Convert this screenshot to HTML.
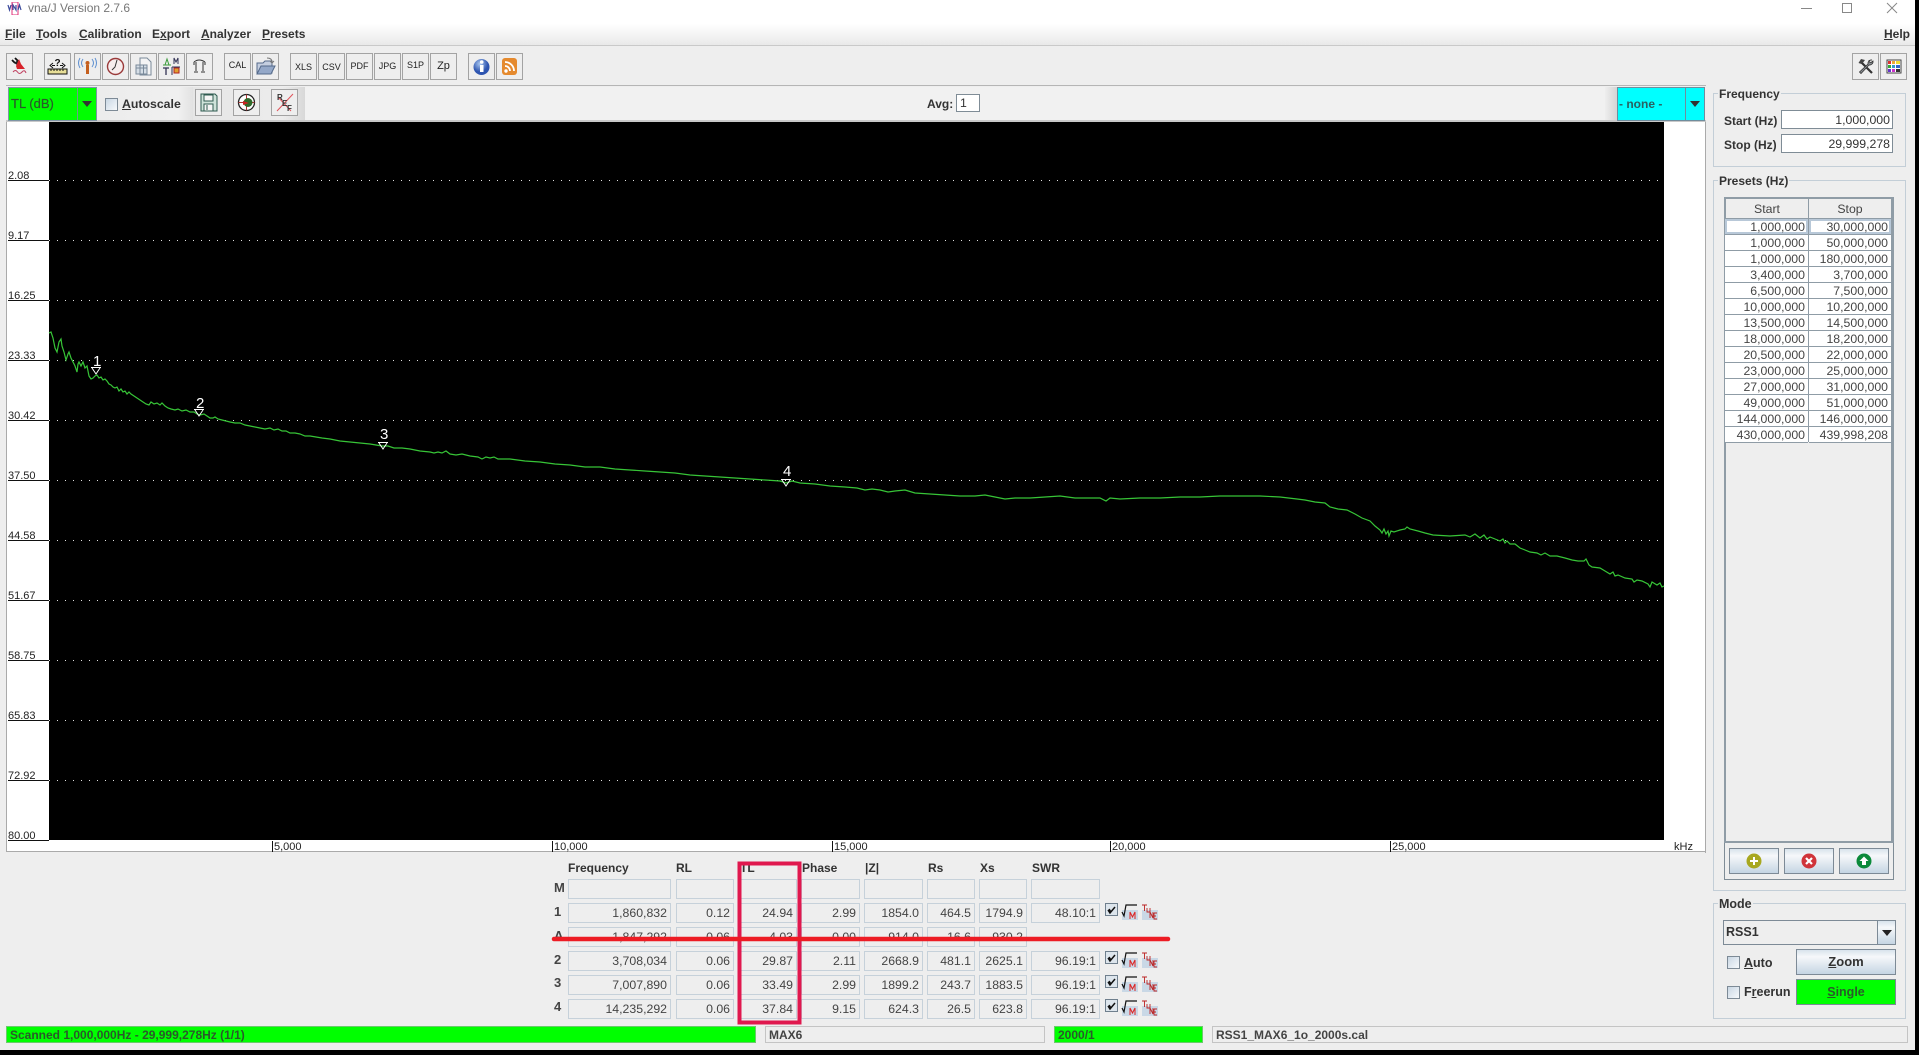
<!DOCTYPE html>
<html><head><meta charset="utf-8"><title>vna/J Version 2.7.6</title>
<style>
html,body{margin:0;padding:0;width:1919px;height:1055px;overflow:hidden;background:#000}
#w{position:absolute;left:0;top:0;width:1915px;height:1050px;background:#eee;overflow:hidden;font:bold 12px/14px "Liberation Sans",sans-serif;color:#333}
#w div,#w svg{position:absolute}
#w u{text-decoration:underline}
.t{white-space:nowrap}
.b{box-sizing:border-box;width:27px;height:27px;top:53px;border:1px solid #a3a3a3;background:#eee;font:9px/25px "Liberation Sans",sans-serif;text-align:center;color:#222}
.b svg{left:0;top:0}
.y{left:8px;font:11px/12px "Liberation Sans",sans-serif;color:#222;white-space:nowrap}
.x{top:841px;height:11px;overflow:hidden;font:11px/12px "Liberation Sans",sans-serif;color:#222;white-space:nowrap}
.h{top:861px;line-height:14px;white-space:nowrap}
.l{left:554px;white-space:nowrap;font-size:13px;color:#444}
.f{box-sizing:border-box;height:20px;border:1px solid #c6d1da;font:12.3px/19px "Liberation Sans",sans-serif;color:#444;text-align:right;padding-right:3px;white-space:nowrap;overflow:hidden}
.g{box-sizing:border-box;border:1px solid #c3ced7;left:1713px;width:193px}
.gt{left:1718px;background:#eee;padding:0 1px;line-height:14px;white-space:nowrap}
.in{box-sizing:border-box;left:1781px;width:112px;height:19px;background:#fff;border:1px solid #7f8c96;font:12.3px/18px "Liberation Sans",sans-serif;color:#333;text-align:right;padding-right:2px}
.c{box-sizing:border-box;height:16px;border-bottom:1px solid #8f9ca6;background:#fff;font:12.3px/17px "Liberation Sans",sans-serif;color:#444;text-align:right;padding-right:3px;white-space:nowrap}
.s{left:1725px;width:83px}.p{left:1809px;width:82px}
.btn{box-sizing:border-box;border:1px solid #7d8a96;background:linear-gradient(#d8e3ec,#f6f8fa 28%,#c5d5e3);text-align:center}
.cb{box-sizing:border-box;width:13px;height:13px;border:1px solid #7d8a96;background:linear-gradient(135deg,#c9d7e4,#f7f9fb)}
.st{box-sizing:border-box;top:1026px;height:17px;font:bold 12px/16px "Liberation Sans",sans-serif;color:#333;padding-left:3px;white-space:nowrap;overflow:hidden}
</style></head><body>
<div id="w">
<!-- title and menu -->
<div style="left:0;top:0;width:1915px;height:24px;background:#fff"></div>
<div style="left:0;top:24px;width:1915px;height:21px;background:linear-gradient(#fff,#e9e9e9)"></div>
<div style="left:0;top:45px;width:1915px;height:1px;background:#c9c9c9"></div>
<svg style="left:7px;top:2px" width="16" height="13" viewBox="0 0 16 13"><rect x="5" y="0" width="6" height="13" fill="none" stroke="#e0307a"/><path d="M1 3l1.5 5L4 3M6 8V3l3 5V3M11 8l1.5-5L14 8" fill="none" stroke="#3b4a9c" stroke-width="1.2"/></svg>
<div class="t" style="left:28px;top:1px;font:12px/14px 'Liberation Sans',sans-serif;color:#777">vna/J Version 2.7.6</div>
<svg style="left:1795px;top:0" width="110" height="16"><path d="M6 8.5h11" stroke="#888" fill="none"/><rect x="47.5" y="3.5" width="9" height="9" fill="none" stroke="#888"/><path d="M92 3l10 10M102 3L92 13" stroke="#888" fill="none"/></svg>
<div class="t" style="left:5px;top:27px"><u>F</u>ile</div>
<div class="t" style="left:36px;top:27px"><u>T</u>ools</div>
<div class="t" style="left:79px;top:27px"><u>C</u>alibration</div>
<div class="t" style="left:152px;top:27px">E<u>x</u>port</div>
<div class="t" style="left:201px;top:27px"><u>A</u>nalyzer</div>
<div class="t" style="left:262px;top:27px"><u>P</u>resets</div>
<div class="t" style="left:1884px;top:27px"><u>H</u>elp</div>

<!-- toolbar -->
<div class="b" style="left:6px"><svg width="25" height="25"><path d="M5 6l3 3M8 4l3 3" stroke="#111" stroke-width="1.8" fill="none"/><path d="M7 9l4-3 2 2-3 3z" fill="#222"/><path d="M12 5l2 5 4 5H10l-1-3z" fill="#d8222a"/><path d="M6 18q2.500-3 4.500 0t4.500 0 4 1" stroke="#c04060" fill="none"/></svg></div>
<div class="b" style="left:44px"><svg width="25" height="25"><path d="M8 9L5 11.500 8 14M17 9l3 2.500L17 14M7 11.500h3M15 11.500h3" stroke="#111" fill="none"/><text x="12.5" y="12" font-size="10" font-weight="bold" text-anchor="middle" font-family="Liberation Sans" fill="#111">?</text><rect x="3" y="15" width="19" height="5" fill="#e8df98" stroke="#111"/><path d="M6 15v2M9 15v2M12 15v2M15 15v2M18 15v2" stroke="#111"/></svg></div>
<div class="b" style="left:74px"><svg width="25" height="25"><rect x="11" y="11" width="3" height="9" fill="#c5601f"/><circle cx="12.5" cy="9" r="2" fill="#c5601f"/><path d="M8 5q-3 4 0 8M17 5q3 4 0 8M5 4q-3 5 0 10M20 4q3 5 0 10" stroke="#5d8fd0" fill="none"/></svg></div>
<div class="b" style="left:102px"><svg width="25" height="25"><circle cx="12.5" cy="12.5" r="8" fill="#f7eeee" stroke="#9a3a3a" stroke-width="1.4"/><path d="M14 6l-2 7-3 3" stroke="#333" fill="none"/></svg></div>
<div class="b" style="left:130px"><svg width="25" height="25"><path d="M9 4h7l4 4v13H9z" fill="#f4f4f4" stroke="#7a8a9a"/><rect x="5" y="11" width="11" height="9" fill="#d5dee6" stroke="#7a8a9a"/><path d="M5 14h11M9 11v9M12.5 11v9" stroke="#7a8a9a"/></svg></div>
<div class="b" style="left:158px"><svg width="25" height="25"><path d="M4 11h8M6 11l2-6 2 6" stroke="#3a9a3a" fill="none"/><path d="M15 10V4l2 4 2-4v6" stroke="#335" fill="none"/><path d="M4 14h6M7 14v7" stroke="#335" fill="none" stroke-width="1.3"/><path d="M13 13h8M13 13v8" stroke="#335" fill="none"/><rect x="15" y="14" width="5" height="5" fill="#e0a030" stroke="#b02020"/></svg></div>
<div class="b" style="left:186px"><svg width="25" height="25"><path d="M7 8q5-4 11 0M9 8v9M16 8v9M7 18h4M14 18h4M7 8v3M18 8v3" stroke="#333" fill="none"/></svg></div>
<div class="b" style="left:224px;line-height:23px">CAL</div>
<div class="b" style="left:252px"><svg width="25" height="25"><path d="M4 9h6l2-2h7v12H4z" fill="#c5cfe0" stroke="#556a8a"/><path d="M4 20l4-8h14l-4 8z" fill="#94a8c8" stroke="#556a8a"/><path d="M14 4q5 0 5 4M17 7l2 2 2-2" stroke="#777" fill="none"/></svg></div>
<div class="b" style="left:290px;line-height:26px">XLS</div>
<div class="b" style="left:318px;line-height:26px">CSV</div>
<div class="b" style="left:346px;line-height:25px">PDF</div>
<div class="b" style="left:374px;line-height:25px">JPG</div>
<div class="b" style="left:402px;line-height:22px">S1P</div>
<div class="b" style="left:430px;font-size:11px;line-height:24px">Zp</div>
<div class="b" style="left:468px"><svg width="25" height="25"><defs><radialGradient id="ig" cx=".4" cy=".3"><stop offset="0" stop-color="#aac8f0"/><stop offset="1" stop-color="#2e55b0"/></radialGradient></defs><circle cx="12.5" cy="13" r="8" fill="url(#ig)"/><rect x="11" y="11" width="3.5" height="7" fill="#fff"/><circle cx="12.700" cy="8" r="1.8" fill="#fff"/></svg></div>
<div class="b" style="left:496px"><svg width="25" height="25"><rect x="5" y="4" width="15" height="17" rx="3" fill="#e58a2e"/><circle cx="9" cy="17" r="1.7" fill="#fff"/><path d="M8 12a5 5 0 0 1 5 5M8 8a9 9 0 0 1 9 9" stroke="#fff" stroke-width="1.8" fill="none"/></svg></div>
<div class="b" style="left:1852px"><svg width="25" height="25"><path d="M8 8l11 11" stroke="#333" stroke-width="2.2"/><path d="M8 5l4 1-1.500 2 -2 2-3-1z" fill="#444"/><path d="M19 6a3.500 3.500 0 0 0-4 4L6.500 18l1.500 1.500L16 11a3.500 3.500 0 0 0 4-4l-2 1.500-1.500-.5-.5-1.500z" fill="#8a8f94" stroke="#333" stroke-width=".8"/></svg></div>
<div class="b" style="left:1880px"><svg width="25" height="25"><rect x="6" y="6" width="14" height="13" fill="#fff" stroke="#444"/><path d="M7 7h3v3H7z" fill="#d33"/><path d="M11 7h3v3h-3z" fill="#ea3"/><path d="M15 7h4v3h-4z" fill="#ed3"/><path d="M7 11h3v3H7z" fill="#3a3"/><path d="M11 11h3v3h-3z" fill="#39c"/><path d="M15 11h4v3h-4z" fill="#36c"/><path d="M7 15h3v3H7z" fill="#63c"/><path d="M11 15h3v3h-3z" fill="#c3c"/><path d="M15 15h4v3h-4z" fill="#333"/></svg></div>
<div style="left:6px;top:85px;width:1700px;height:1px;background:#b5b5b5"></div>

<!-- second toolbar -->
<div style="left:97px;top:87px;width:96px;height:33px;background:linear-gradient(90deg,#ececec,#f0f0f0 85%,#e2e2e2)"></div>
<div style="left:193px;top:87px;width:112px;height:33px;background:linear-gradient(90deg,#e6e6e6,#ececec 80%,#d8d8d8)"></div>
<div style="left:305px;top:87px;width:1300px;height:33px;background:#f1f1f1"></div>
<div style="left:1605px;top:87px;width:12px;height:33px;background:linear-gradient(90deg,#eee,#d5d5d5)"></div>
<div style="left:6px;top:120px;width:1700px;height:2px;background:#c8c8c8"></div>
<div style="box-sizing:border-box;left:8px;top:87px;width:89px;height:34px;background:#0f0;border:1px solid #7f95a5"></div>
<div style="left:77px;top:88px;width:1px;height:32px;background:#6f9a8f"></div>
<div class="t" style="left:11px;top:97px;font-size:13px;font-weight:normal;color:#2a5a2a;-webkit-text-stroke:.2px #2a5a2a">TL (dB)</div>
<svg style="left:81px;top:101px" width="12" height="7"><path d="M1 0h10L6 6z" fill="#333"/></svg>
<div class="cb" style="left:105px;top:98px"></div>
<div class="t" style="left:122px;top:97px;font-size:12.300px"><u>A</u>utoscale</div>
<div class="b" style="left:195px;top:89px"><svg width="25" height="25"><path d="M5 4h14l2 2v15H5z" fill="#cfe3da" stroke="#2f5b50"/><rect x="8" y="5" width="9" height="6" fill="#f5f5f5" stroke="#2f5b50"/><rect x="8" y="14" width="9" height="7" fill="#f5f5f5" stroke="#2f5b50"/><path d="M11 15v5" stroke="#2f5b50"/></svg></div>
<div class="b" style="left:233px;top:89px"><svg width="25" height="25"><circle cx="12.5" cy="12.5" r="8" fill="#fff" stroke="#222" stroke-width="1.3"/><path d="M4.5 12.5h16M12.5 4.5v16" stroke="#a33"/><circle cx="14" cy="12.5" r="4.5" fill="#2f6a2a"/><path d="M9 11l6 2-6 2z" fill="#c22"/></svg></div>
<div class="b" style="left:271px;top:89px"><svg width="25" height="25"><path d="M5 21L21 4M6 7l13 14" stroke="#e0535a"/><text x="5" y="10" font-size="8" font-weight="bold" font-family="Liberation Sans" fill="#333">R</text><text x="10" y="16" font-size="8" font-weight="bold" font-family="Liberation Sans" fill="#333">E</text><text x="15" y="21" font-size="8" font-weight="bold" font-family="Liberation Sans" fill="#333">F</text></svg></div>
<div class="t" style="left:927px;top:97px">Avg:</div>
<div class="in" style="left:956px;top:94px;width:24px;height:18px;text-align:left;padding-left:3px;line-height:17px">1</div>
<div style="box-sizing:border-box;left:1617px;top:87px;width:88px;height:34px;background:#0ff;border:1px solid #6f8d9d"></div>
<div style="left:1685px;top:88px;width:1px;height:32px;background:#6f8d9d"></div>
<div class="t" style="left:1619px;top:97px;color:#2a6060;font-size:12px">- none -</div>
<svg style="left:1689px;top:101px" width="12" height="7"><path d="M1 0h10L6 6z" fill="#333"/></svg>

<!-- plot -->
<div style="left:6px;top:122px;width:1699px;height:730px;background:#fff;box-shadow:inset 0 -1px 0 #aaa"></div>
<div style="left:6px;top:122px;width:1px;height:730px;background:#aaa"></div>
<div style="left:1705px;top:122px;width:1px;height:731px;background:#aaa"></div>
<div style="left:49px;top:122px;width:1615px;height:718px;background:#000"></div>
<div class="y" style="top:170px">2.08</div><div class="y" style="top:230px">9.17</div>
<div class="y" style="top:290px">16.25</div><div class="y" style="top:350px">23.33</div>
<div class="y" style="top:410px">30.42</div><div class="y" style="top:470px">37.50</div>
<div class="y" style="top:530px">44.58</div><div class="y" style="top:590px">51.67</div>
<div class="y" style="top:650px">58.75</div><div class="y" style="top:710px">65.83</div>
<div class="y" style="top:770px">72.92</div><div class="y" style="top:830px">80.00</div>
<div class="x" style="left:274px">5,000</div><div class="x" style="left:554px">10,000</div>
<div class="x" style="left:834px">15,000</div><div class="x" style="left:1112px">20,000</div>
<div class="x" style="left:1392px">25,000</div><div class="x" style="left:1674px">kHz</div>

<svg style="left:0;top:0" width="1915" height="1050" fill="none">
<path d="M8 180.5h41M8 240.5h41M8 300.5h41M8 360.5h41M8 420.5h41M8 480.5h41M8 540.5h41M8 600.5h41M8 660.5h41M8 720.5h41M8 780.5h41M8 840.5h41" stroke="#111"/>
<path d="M272.5 841v11M552.5 841v11M832.5 841v11M1110.5 841v11M1390.5 841v11" stroke="#111"/>
<path d="M49 180.5H1664M49 240.5H1664M49 300.5H1664M49 360.5H1664M49 420.5H1664M49 480.5H1664M49 540.5H1664M49 600.5H1664M49 660.5H1664M49 720.5H1664M49 780.5H1664" stroke="#e0e0e0" stroke-dasharray="1 7"/>
<polyline stroke="#37c437" stroke-width="1.2" points="49,333 51,332 53,338 55,348 57,352 59,342 61,339 62,346 64,352 66,360 68,354 69,352 71,358 73,362 75,366 77,372 78,364 79,362 81,366 83,362 85,368 87,366 89,376 91,379 93,378 95,376 97,375 99,378 101,377 103,380 105,379 107,381 109,384 111,385 113,387 115,388 117,387 119,391 121,389 123,392 125,391 127,394 129,392 131,394 134,396 137,398 140,400 143,402 146,404 149,405 151,402 154,404 157,403 160,405 162,403 165,406 168,408 171,409 175,410 178,409 182,411 186,410 190,412 194,412 197,414 200,415 204,414 207,416 210,418 213,418 215,417 218,419 222,420 226,421 230,422 235,423 240,423 245,425 250,426 255,427 260,428 265,429 270,428 274,430 278,429 282,431 286,431 290,433 295,433 300,434 305,436 310,436 316,437 322,438 330,439 340,441 350,442 360,443 370,444 376,445 382,446 388,446 394,448 402,448 410,449 420,451 430,452 434,453 438,452 442,453 446,451 450,454 456,455 462,454 470,456 478,457 482,459 486,457 490,458 494,457 498,459 510,459 525,461 540,462 555,464 570,465 585,467 600,467 615,469 630,470 645,471 660,472 675,473 690,475 705,476 720,477 735,478 750,479 765,480 780,481 786,483 792,481 800,483 815,484 830,486 845,487 857,488 865,490 872,489 880,490 888,492 895,491 905,490 915,493 930,494 945,495 960,496 975,496 985,495 995,497 1005,499 1015,498 1030,498 1045,497 1060,496 1075,498 1090,498 1100,498 1106,501 1110,498 1120,499 1140,498 1160,498 1180,497 1200,497 1220,496 1240,496 1260,496 1280,497 1297,499 1305,500 1315,502 1325,503 1330,507 1338,509 1347,510 1355,514 1362,518 1370,521 1375,526 1380,530 1382,533 1384,529 1386,534 1388,531 1389,536 1391,531 1394,532 1400,530 1405,529 1407,527 1410,529 1418,531 1425,533 1433,535 1450,536 1465,535 1470,537 1475,534 1480,538 1484,535 1487,539 1490,537 1495,539 1500,541 1503,539 1505,543 1507,541 1510,544 1515,544 1520,548 1525,550 1530,552 1537,553 1541,555 1545,553 1550,556 1557,556 1565,558 1572,560 1578,561 1584,561 1586,559 1589,565 1592,567 1600,568 1605,571 1610,574 1613,572 1615,576 1618,575 1625,578 1632,579 1634,582 1637,580 1642,581 1648,584 1650,587 1652,582 1657,585 1660,583 1662,587 1664,586"/>
<path d="M91 367.5h10M92 368l4 6 4-6M194 409.5h10M195 410l4 6 4-6M378 442.5h10M379 443l4 6 4-6M781 479.5h10M782 480l4 6 4-6" stroke="#fff"/>
</svg>
<div class="t" style="left:93px;top:354px;color:#fff;font:15px/16px 'Liberation Sans',sans-serif">1</div>
<div class="t" style="left:196px;top:396px;color:#fff;font:15px/16px 'Liberation Sans',sans-serif">2</div>
<div class="t" style="left:380px;top:427px;color:#fff;font:15px/16px 'Liberation Sans',sans-serif">3</div>
<div class="t" style="left:783px;top:464px;color:#fff;font:15px/16px 'Liberation Sans',sans-serif">4</div>

<!-- markers -->
<div class="h" style="left:568px">Frequency</div><div class="h" style="left:676px">RL</div><div class="h" style="left:740px">TL</div>
<div class="h" style="left:802px">Phase</div><div class="h" style="left:865px">|Z|</div><div class="h" style="left:928px">Rs</div>
<div class="h" style="left:980px">Xs</div><div class="h" style="left:1032px">SWR</div>
<div class="l" style="top:881px">M</div><div class="l" style="top:905px">1</div><div class="l" style="top:929px">A</div>
<div class="l" style="top:953px">2</div><div class="l" style="top:976px">3</div><div class="l" style="top:1000px">4</div>

<div class="f" style="left:568px;top:879px;width:103px"></div><div class="f" style="left:676px;top:879px;width:58px"></div><div class="f" style="left:738px;top:879px;width:59px"></div><div class="f" style="left:801px;top:879px;width:59px"></div><div class="f" style="left:864px;top:879px;width:59px"></div><div class="f" style="left:927px;top:879px;width:48px"></div><div class="f" style="left:979px;top:879px;width:48px"></div><div class="f" style="left:1031px;top:879px;width:69px"></div>

<div class="f" style="left:568px;top:903px;width:103px">1,860,832</div><div class="f" style="left:676px;top:903px;width:58px">0.12</div><div class="f" style="left:738px;top:903px;width:59px">24.94</div><div class="f" style="left:801px;top:903px;width:59px">2.99</div><div class="f" style="left:864px;top:903px;width:59px">1854.0</div><div class="f" style="left:927px;top:903px;width:48px">464.5</div><div class="f" style="left:979px;top:903px;width:48px">1794.9</div><div class="f" style="left:1031px;top:903px;width:69px">48.10:1</div>

<div class="f" style="left:568px;top:927px;width:103px">1,847,292</div><div class="f" style="left:676px;top:927px;width:58px">0.06</div><div class="f" style="left:738px;top:927px;width:59px">4.03</div><div class="f" style="left:801px;top:927px;width:59px">0.00</div><div class="f" style="left:864px;top:927px;width:59px">914.0</div><div class="f" style="left:927px;top:927px;width:48px">16.6</div><div class="f" style="left:979px;top:927px;width:48px">930.2</div>

<div class="f" style="left:568px;top:951px;width:103px">3,708,034</div><div class="f" style="left:676px;top:951px;width:58px">0.06</div><div class="f" style="left:738px;top:951px;width:59px">29.87</div><div class="f" style="left:801px;top:951px;width:59px">2.11</div><div class="f" style="left:864px;top:951px;width:59px">2668.9</div><div class="f" style="left:927px;top:951px;width:48px">481.1</div><div class="f" style="left:979px;top:951px;width:48px">2625.1</div><div class="f" style="left:1031px;top:951px;width:69px">96.19:1</div>

<div class="f" style="left:568px;top:975px;width:103px">7,007,890</div><div class="f" style="left:676px;top:975px;width:58px">0.06</div><div class="f" style="left:738px;top:975px;width:59px">33.49</div><div class="f" style="left:801px;top:975px;width:59px">2.99</div><div class="f" style="left:864px;top:975px;width:59px">1899.2</div><div class="f" style="left:927px;top:975px;width:48px">243.7</div><div class="f" style="left:979px;top:975px;width:48px">1883.5</div><div class="f" style="left:1031px;top:975px;width:69px">96.19:1</div>

<div class="f" style="left:568px;top:999px;width:103px">14,235,292</div><div class="f" style="left:676px;top:999px;width:58px">0.06</div><div class="f" style="left:738px;top:999px;width:59px">37.84</div><div class="f" style="left:801px;top:999px;width:59px">9.15</div><div class="f" style="left:864px;top:999px;width:59px">624.3</div><div class="f" style="left:927px;top:999px;width:48px">26.5</div><div class="f" style="left:979px;top:999px;width:48px">623.8</div><div class="f" style="left:1031px;top:999px;width:69px">96.19:1</div>

<svg style="left:1105px;top:0" width="56" height="1025" fill="none">
<defs><g id="mk">
<rect x=".5" y=".5" width="12" height="12" fill="#dde5ec" stroke="#6f7f8d"/><path d="M3 7l2 3 5-6M4 6l2 3" stroke="#111" stroke-width="1.5"/>
<rect x="17" y="7" width="16" height="10" fill="#c9d8e6"/><path d="M17 9l2 4 2-11h11" stroke="#111" stroke-width="1.2"/><path d="M25 16V9l2.5 5L30 9v7" stroke="#d22"/>
<rect x="37" y="7" width="16" height="10" fill="#c9d8e6"/><path d="M37 2h5M39.5 2v6M42 5v4h3V5M45 15V9l3 6V9M49 10h3M49 10v6h3M49 13h2" stroke="#b22" stroke-width=".9"/>
</g></defs>
<use href="#mk" y="903"/><use href="#mk" y="951"/><use href="#mk" y="975"/><use href="#mk" y="999"/>
</svg>

<!-- status -->
<div class="st" style="left:6px;width:750px;background:#0f0;border:1px solid #6acb6a;color:#2a5a2a">Scanned 1,000,000Hz - 29,999,278Hz (1/1)</div>
<div class="st" style="left:765px;width:280px;border:1px solid #c4c4c4;color:#444">MAX6</div>
<div class="st" style="left:1054px;width:149px;background:#0f0;border:1px solid #6acb6a;color:#2a5a2a">2000/1</div>
<div class="st" style="left:1212px;width:696px;border:1px solid #c4c4c4;color:#444">RSS1_MAX6_1o_2000s.cal</div>

<!-- Frequency -->
<div class="g" style="top:93px;height:74px"></div><div class="gt" style="top:87px">Frequency</div>
<div class="t" style="left:1724px;top:114px">Start (Hz)</div><div class="t" style="left:1724px;top:138px">Stop (Hz)</div>
<div class="in" style="top:110px">1,000,000</div><div class="in" style="top:134px">29,999,278</div>

<!-- Presets -->
<div class="g" style="top:180px;height:711px"></div><div class="gt" style="top:174px">Presets (Hz)</div>
<div style="box-sizing:border-box;left:1724px;top:197px;width:170px;height:683px;border:1px solid #7f8c96"></div>
<div style="box-sizing:border-box;left:1724px;top:197px;width:170px;height:646px;border:2px solid #8f9ca6;border-right-width:3px;background:#eee"></div>
<div style="left:1726px;top:199px;width:82px;height:19px;background:#eee;border-bottom:1px solid #8f9ca6;font:12.3px/21px 'Liberation Sans',sans-serif;text-align:center;color:#444">Start</div>
<div style="left:1809px;top:199px;width:82px;height:19px;background:#eee;border-bottom:1px solid #8f9ca6;font:12.3px/21px 'Liberation Sans',sans-serif;text-align:center;color:#444">Stop</div>
<div style="left:1808px;top:199px;width:1px;height:243px;background:#8f9ca6"></div>
<div class="c s" style="top:219px;box-shadow:inset 0 0 0 2px #b8c8d8">1,000,000</div><div class="c p" style="top:219px;box-shadow:inset 0 0 0 2px #b8c8d8">30,000,000</div>
<div class="c s" style="top:235px">1,000,000</div><div class="c p" style="top:235px">50,000,000</div>
<div class="c s" style="top:251px">1,000,000</div><div class="c p" style="top:251px">180,000,000</div>
<div class="c s" style="top:267px">3,400,000</div><div class="c p" style="top:267px">3,700,000</div>
<div class="c s" style="top:283px">6,500,000</div><div class="c p" style="top:283px">7,500,000</div>
<div class="c s" style="top:299px">10,000,000</div><div class="c p" style="top:299px">10,200,000</div>
<div class="c s" style="top:315px">13,500,000</div><div class="c p" style="top:315px">14,500,000</div>
<div class="c s" style="top:331px">18,000,000</div><div class="c p" style="top:331px">18,200,000</div>
<div class="c s" style="top:347px">20,500,000</div><div class="c p" style="top:347px">22,000,000</div>
<div class="c s" style="top:363px">23,000,000</div><div class="c p" style="top:363px">25,000,000</div>
<div class="c s" style="top:379px">27,000,000</div><div class="c p" style="top:379px">31,000,000</div>
<div class="c s" style="top:395px">49,000,000</div><div class="c p" style="top:395px">51,000,000</div>
<div class="c s" style="top:411px">144,000,000</div><div class="c p" style="top:411px">146,000,000</div>
<div class="c s" style="top:427px">430,000,000</div><div class="c p" style="top:427px">439,998,208</div>
<div class="btn" style="left:1729px;top:848px;width:50px;height:26px"><svg style="left:16px;top:4px" width="16" height="16"><circle cx="8" cy="8" r="7.5" fill="#a8a820"/><path d="M8 4v8M4 8h8" stroke="#fff" stroke-width="2"/></svg></div>
<div class="btn" style="left:1784px;top:848px;width:50px;height:26px"><svg style="left:16px;top:4px" width="16" height="16"><circle cx="8" cy="8" r="7.5" fill="#d0343a"/><path d="M5 5l6 6M11 5l-6 6" stroke="#fff" stroke-width="2.2"/></svg></div>
<div class="btn" style="left:1839px;top:848px;width:50px;height:26px"><svg style="left:16px;top:4px" width="16" height="16"><circle cx="8" cy="8" r="7.5" fill="#0b8a3a"/><path d="M8 3.5L12.5 8H10v4H6V8H3.500z" fill="#fff"/></svg></div>

<!-- Mode -->
<div class="g" style="top:903px;height:116px"></div><div class="gt" style="top:897px;font-size:12.5px">Mode</div>
<div style="box-sizing:border-box;left:1723px;top:920px;width:173px;height:25px;border:1px solid #7d8a96;background:#eee;font:bold 12.5px/23px 'Liberation Sans',sans-serif;padding-left:2px;color:#333">RSS1</div>
<div class="btn" style="left:1877px;top:920px;width:19px;height:25px"><svg style="left:3px;top:9px" width="12" height="7"><path d="M1 0h10L6 6z" fill="#222"/></svg></div>
<div class="cb" style="left:1727px;top:956px"></div><div class="t" style="left:1744px;top:956px;font-size:12.5px"><u>A</u>uto</div>
<div class="cb" style="left:1727px;top:986px"></div><div class="t" style="left:1744px;top:985px;font-size:12.5px">F<u>r</u>eerun</div>
<div class="btn" style="left:1796px;top:949px;width:100px;height:26px;font-size:13px;line-height:24px"><u>Z</u>oom</div>
<div class="btn" style="left:1796px;top:979px;width:100px;height:26px;background:#0f0;line-height:24px;font-size:12.5px;color:#2a5a2a"><u>S</u>ingle</div>

<!-- annotations -->
<svg style="left:0;top:0" width="1915" height="1050" fill="none">
<rect x="739.5" y="863.5" width="60" height="159" stroke="#e0184e" stroke-width="4"/>
<path d="M554 939H1168" stroke="#ed1c24" stroke-width="4.5" stroke-linecap="round"/>
</svg>
</div>
</body></html>
